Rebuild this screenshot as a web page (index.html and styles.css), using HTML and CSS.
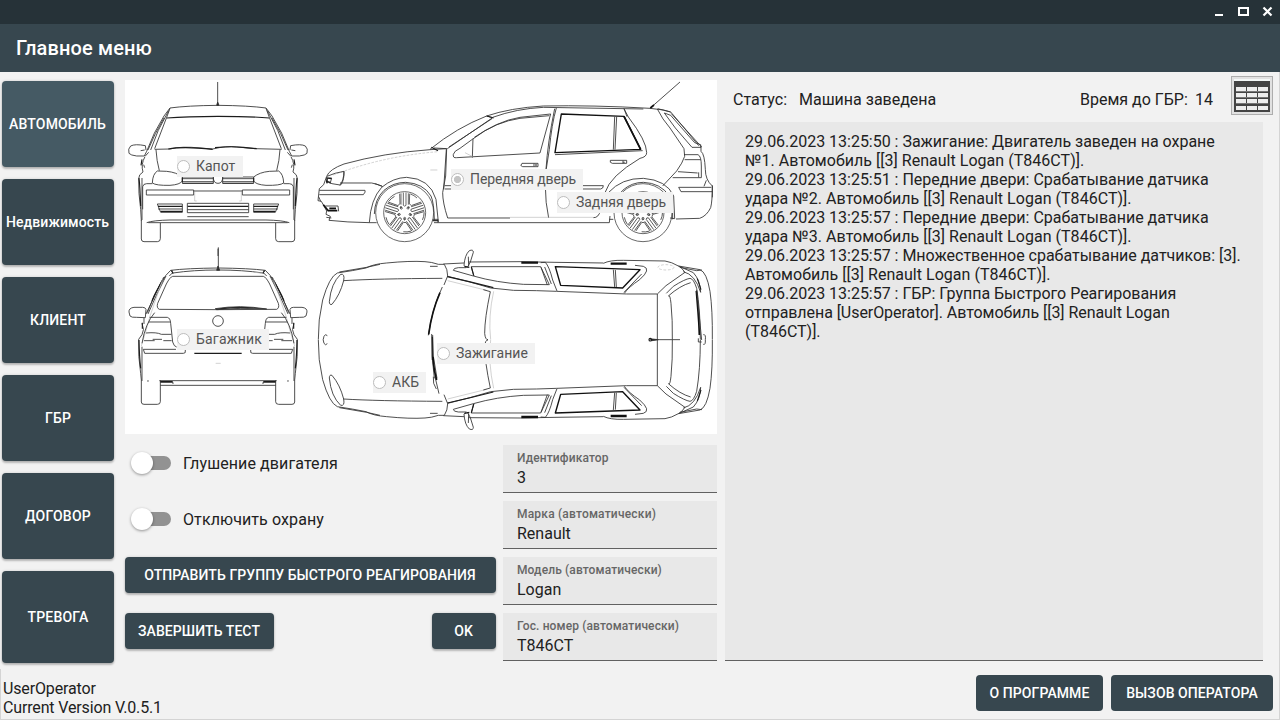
FILE: index.html
```html
<!DOCTYPE html>
<html lang="ru">
<head>
<meta charset="utf-8">
<title>Главное меню</title>
<link rel="stylesheet" href="styles.css">
</head>
<body>
<div class="window">
  <div class="titlebar">
    <svg class="win-icons" width="60" height="24" viewBox="1215 0 60 24" shape-rendering="crispEdges">
      <path d="M1215 14h8v2h-8z" fill="#fff"/>
      <path d="M1238 7h11v9h-11zM1240 9v5h7v-5z" fill="#fff" fill-rule="evenodd"/>
      <path d="M1263.5 7.500l8 8M1271.500 7.500l-8 8" stroke="#fff" stroke-width="2.200" shape-rendering="auto"/>
    </svg>
  </div>
  <header class="appbar">Главное меню</header>

  <main class="main">
    <nav class="sidebar">
      <button class="btn tab active">АВТОМОБИЛЬ</button>
      <button class="btn tab mixed">Недвижимость</button>
      <button class="btn tab">КЛИЕНТ</button>
      <button class="btn tab">ГБР</button>
      <button class="btn tab">ДОГОВОР</button>
      <button class="btn tab last">ТРЕВОГА</button>
    </nav>

    <section class="car-panel">
      <div class="scheme">
        <svg class="drawing" width="592" height="354" viewBox="125 80 592 354">
          <defs>
            <g id="front-half">
              <path d="M294 88Q200 89 150 96L132 120Q100 170 80 226M150 97L140 124L104 218M146 104Q110 165 92 222M132 126Q104 172 84 222"/>
              <path d="M140 126Q200 121 294 121" class="b"/>
              <path d="M78 222L76 209Q45 203 32 210Q23 218 27 232Q32 238 50 240L73 240L80 226M62 224L74 222"/>
              <path d="M76 240L86 229M75 242Q62 265 69 288Q56 295 56 308Q55 350 62 400L64 434M66 306V432M71 266L74 275"/>
              <path d="M57 306Q60 330 62 390M66 250L63 268" class="b"/>
              <path d="M108 221Q110 255 118 284"/>
              <path d="M187 303Q170 289 140 286L112 285Q98 294 97 321Q108 329 150 328Q180 326 187 315Z"/>
              <path d="M187 303H280V322H187M187 308H280M187 317H280"/>
              <path d="M187 305V320" class="b"/>
              <path d="M68 400V332Q70 323 80 323L97 323M187 322H280"/>
              <path d="M79 342H221V357H79Z"/>
              <path d="M224 348V375H230" class="f"/>
              <path d="M221 345H294"/>
              <path d="M294 382H202V410H294M202 401H294M202 422H294M112 384H187V409H122ZM114 399H187"/>
              <path d="M203 391H294M114 391H187M122 406H187" class="b"/>
              <path d="M80 440Q100 433 150 432H294M85 440H294"/>
              <path d="M64 432V489Q64 497 72 497H112Q121 497 121 488V441"/>
            </g>
            <g id="rear-half">
              <path d="M294 84Q200 85 152 91Q137 103 122 130L78 222M294 90Q220 90 159 99L152 91M158 98L148 108M132 112Q100 165 82 218M138 108Q108 165 84 222"/>
              <path d="M294 109H158Q150 111 139 132L113 190Q109 204 118 208L294 209"/>
              <path d="M132 112Q108 155 96 182M155 91L159 101" class="b"/>
              <path d="M78 208Q76 202 68 202H42Q26 204 27 216L30 228Q34 233 50 232L76 233Z"/>
              <path d="M130 112L106 182Q88 230 78 272L64 318" class="f"/>
              <path d="M72 234V252M66 250Q75 270 66 284L56 298Q54 350 62 400L64 420M66 320V423M104 218Q76 250 66 310"/>
              <path d="M67 248V266M57 300Q58 350 62 385" class="b"/>
              <path d="M89 232H142Q151 234 152 250L158 306Q162 320 170 321M86 246H150M78 279Q110 276 124 283H154M72 302H104M98 298H126M130 302H155"/>
              <path d="M70 328H168M70 328L74 340H190Q198 341 196 330"/>
              <path d="M64 420V486Q64 493 72 493H112Q121 493 121 485V421M118 422H294M121 436H294M121 427H159V432"/>
              <path d="M121 425H158M223 340H294" class="b"/>
              <circle cx="84" cy="423" r="1"/>
            </g>
            <g id="wheel">
              <circle r="87"/>
              <circle r="63"/>
              <g id="spoke"><path d="M-4 -60V-22M4 -60V-22M-11 -58V-24M11 -58V-24M-15 -57L-14 -26M15 -57L14 -26L20 -22M-4 -22Q0 -17 4 -22"/><path d="M17 -56Q29 -52 37 -44"/><circle cx="0" cy="17" r="3"/><circle cx="12" cy="-16" r="2"/></g>
              <use href="#spoke" transform="rotate(72)"/>
              <use href="#spoke" transform="rotate(144)"/>
              <use href="#spoke" transform="rotate(216)"/>
              <use href="#spoke" transform="rotate(288)"/>
            </g>
            <g id="top-half">
              <path d="M25 299Q24 240 38 180Q58 110 82 99Q130 92 168 84Q190 72 230 69Q300 62 345 65Q365 66 385 73H403Q413 88 413 108L402 135M88 96L170 82L210 73"/>
              <path d="M92 103Q105 100 101 122Q90 165 66 193Q58 196 58 185Q63 130 92 103Z"/>
              <path d="M100 122Q200 116 397 115M360 79H383M400 72L462 69M475 66L630 65L735 67L880 69"/>
              <path d="M413 109Q480 125 542 144Q610 154 680 152L740 154L950 162H1042"/>
              <path d="M413 122L530 151" class="f"/>
              <path d="M412 110Q480 125 550 143" class="b"/>
              <path d="M490 108Q560 128 640 133"/>
              <path d="M490 108L430 91Q430 84 445 83L468 83M484 82L492 108M484 80H692L718 134L640 133M693 82L712 135M704 81L724 132"/>
              <path d="M462 77Q464 45 478 32Q490 27 490 37L481 66L472 83M462 77L470 83M475 50L476 78"/>
              <path d="M464 79L478 82M484 80L491 107" class="b"/>
              <path d="M706 67Q718 80 728 120L741 153M692 68L706 67M880 70Q900 60 940 61L1065 63Q1085 66 1105 78L1170 89Q1190 96 1200 154Q1208 210 1207 299"/>
              <path d="M736 80L990 89L938 144L752 136Z" class="w"/>
              <path d="M910 89L914 141M916 90L919 141"/>
              <path d="M943 160Q955 142 989 119Q1025 87 1000 79L975 76M942 157L995 102"/>
              <path d="M1042 162V299M1042 162L1068 137L1125 97L1115 85L1105 78"/>
              <path d="M1069 160L1090 139Q1125 117 1140 115Q1151 116 1160 145Q1171 210 1171 299M1075 168Q1110 137 1142 128M1076 168Q1080 163 1083 190Q1088 240 1087 299"/>
              <path d="M1120 95Q1155 103 1172 157Q1171 121 1150 98L1108 79M1110 82L1160 92L1176 90"/>
              <path d="M1162 116L1173 149" class="b"/>
              <path d="M634 68H684M902 71H950" class="v"/>
              <path d="M534 299Q526 300 524 280Q524 235 541 155L520 149"/>
              <path d="M542 299Q534 230 551 154" class="f"/>
            </g>
          </defs>

          <g class="ink" transform="translate(120 76) scale(.33333)">
            <path d="M293 18V88M294 518V540"/>
            <path d="M290 88L293 78L297 88Z" fill="#222"/>
            <use href="#front-half"/>
            <use href="#front-half" transform="translate(588 0) scale(-1 1)"/>
            <path d="M104 220L150 219Q185 210 240 216L278 219Q320 209 350 213L405 218L485 220"/>
            <path d="M145 219Q190 210 278 220M285 215Q330 210 370 214L410 218" class="b"/>
            <path d="M280 304Q280 322 294 322Q308 322 308 304"/>
          </g>

          <g class="ink" transform="translate(120 240) scale(.33333)">
            <path d="M295 22V84"/>
            <path d="M290 91L294 78L299 91Z" fill="#222"/>
            <use href="#rear-half"/>
            <use href="#rear-half" transform="translate(588 0) scale(-1 1)"/>
            <circle cx="294" cy="243" r="16"/>
            <path d="M286 206Q360 194 440 207Q360 202 290 209Z" fill="#222"/>
            <path d="M287 370H302" class="f"/>
            <path d="M405 97L430 100" class="f"/>
          </g>

          <g class="ink" transform="translate(310 76) scale(.33333)">
            <path d="M50 301Q58 280 102 264Q220 231 360 221L410 218L407 300L398 350Q398 380 413 426M409 220L401 340"/>
            <path d="M70 297Q220 240 385 227" class="f" stroke-dasharray="8 4"/>
            <path d="M360 220Q440 155 530 120Q600 96 700 90Q850 87 1020 97L1060 102L1082 108Q1110 140 1166 209M372 216L410 218M412 218L548 125L530 120M417 213L546 128"/>
            <path d="M364 214L384 224M530 120L551 126" class="b"/>
            <path d="M548 124Q620 98 700 94L1000 99"/>
            <path d="M487 190Q560 135 630 124L722 114L690 231L440 245Q428 247 430 235Q432 225 450 217Z"/>
            <path d="M493 184Q560 137 630 127L718 119M489 188L487 245"/>
            <path d="M465 230L488 242" class="f"/>
            <path d="M739 96Q725 145 718 220Q706 280 706 330Q706 380 716 426M734 98Q713 200 708 280M708 280V340"/>
            <path d="M754 114L942 121L992 220L735 230Z" class="w"/>
            <path d="M942 121L992 220" class="h"/>
            <path d="M735 236L998 224M914 122L910 221M920 122L915 221"/>
            <path d="M942 98L955 123Q1010 195 1010 230Q1010 243 990 247Q900 300 885 350M942 98L951 122"/>
            <path d="M1110 18L1020 97"/>
            <path d="M1021 96L1032 87" class="h"/>
            <path d="M1042 99Q1057 130 1080 156L1122 218L1124 241Q1118 260 1100 285L1058 330M1043 98L1082 108M1063 111L1096 156L1146 214H1173L1172 206L1154 200L1082 118Z"/>
            <path d="M1084 113L1174 212M1122 236H1164Q1174 240 1174 270V305H1088M1124 251H1172M1104 287L1163 291M1166 289V304M1173 210V226Q1184 234 1186 280Q1186 312 1207 330Q1207 376 1202 395Q1190 420 1169 427L1098 429"/>
            <path d="M1204 334H1106L1113 347H1207M1207 328V364M1189 313L1182 331"/>
            <path d="M901 253H950V262H907Q898 260 901 253ZM939 254V262M636 262H684V272H638Q628 270 636 262ZM672 263V271"/>
            <path d="M942 257V260M675 267H681" class="b"/>
            <path d="M404 329H880Q880 338 872 339H404"/>
            <path d="M361 282H382" class="f"/>
            <path d="M413 426H600M850 425Q866 426 872 402L884 350M368 430H384V440M372 440H898L900 420M898 430H910"/>
            <path d="M600 424H850" class="f"/>
            <path d="M368 434H384" class="b"/>
            <path d="M50 301L41 326L28 338L24 374L34 376L42 390L50 405L48 415L61 421L57 433Q110 439 178 440H200"/>
            <path d="M51 301Q75 290 102 286Q101 315 90 327L66 323L48 315M102 286V297Q100 320 90 329M48 306H65L60 324M52 308V322M90 321H185Q200 323 218 332M194 323L216 330"/>
            <path d="M49 306L64 308M48 316L61 319M51 306L50 322" class="b"/>
            <path d="M28 343H165Q168 347 160 356H28M26 362L32 376"/>
            <path d="M40 386L56 406M54 404H82M58 397H78" class="h"/>
            <path d="M46 390H84L86 406M49 424L64 426"/>
            <path d="M178 440Q182 370 215 334Q250 305 290 304Q360 307 378 370L385 438M193 414Q194 370 222 343Q250 319 287 319Q340 322 363 360Q372 380 373 432"/>
            <use href="#wheel" transform="translate(284 410)"/>
            <path d="M895 350Q935 306 1000 307Q1070 312 1091 360L1094 428L1080 426M911 405Q912 370 938 343Q965 319 1000 319Q1052 321 1078 360Q1089 380 1088 430"/>
            <use href="#wheel" transform="translate(999 410)"/>
          </g>

          <g class="ink" transform="translate(310 240) scale(.33333)">
            <use href="#top-half"/>
            <use href="#top-half" transform="translate(0 599) scale(1 -1)"/>
            <ellipse cx="1068" cy="82" rx="24" ry="8" class="f" stroke-dasharray="8 5"/>
            <path d="M52 287Q46 280 42 289Q37 299 42 310Q46 318 52 311M1180 284Q1188 282 1186 299Q1187 316 1180 313"/>
            <path d="M397 141Q368 200 355 286"/>
            <path d="M390 158Q365 215 356 283" class="h"/>
            <path d="M365 282Q364 350 373 415M368 285Q366 350 381 415M370 410L371 430L379 447M375 410L387 461"/>
            <path d="M367 290V360" class="b"/>
            <path d="M369 350Q371 390 380 420" class="h"/>
            <path d="M1159 153Q1162 190 1164 215Q1167 250 1168 285" class="h"/>
            <path d="M1160 150L1175 300M1165 295V306H1175M1020 299H1110"/>
            <path d="M1026 297L1045 299L1026 302Z" fill="#222"/>
            <circle cx="1021" cy="299" r="4" class="b"/>
          </g>
        </svg>
        <label class="radio hood"><i></i>Капот</label>
        <label class="radio front-door on"><i></i>Передняя дверь</label>
        <label class="radio rear-door"><i></i>Задняя дверь</label>
        <label class="radio trunk"><i></i>Багажник</label>
        <label class="radio ignition"><i></i>Зажигание</label>
        <label class="radio battery"><i></i>АКБ</label>
      </div>

      <div class="controls">
        <div class="actions">
          <label class="switch"><i></i>Глушение двигателя</label>
          <label class="switch"><i></i>Отключить охрану</label>
          <button class="btn send">ОТПРАВИТЬ ГРУППУ БЫСТРОГО РЕАГИРОВАНИЯ</button>
          <div class="action-row">
            <button class="btn finish">ЗАВЕРШИТЬ ТЕСТ</button>
            <button class="btn ok">OK</button>
          </div>
        </div>
        <div class="fields">
          <div class="field"><span class="caption">Идентификатор</span><span class="value">3</span></div>
          <div class="field"><span class="caption wide">Марка (автоматически)</span><span class="value">Renault</span></div>
          <div class="field"><span class="caption">Модель (автоматически)</span><span class="value">Logan</span></div>
          <div class="field"><span class="caption">Гос. номер (автоматически)</span><span class="value">Т846СТ</span></div>
        </div>
      </div>
    </section>

    <section class="log-panel">
      <div class="status">
        <span class="status-name">Статус:</span>
        <span class="status-value">Машина заведена</span>
        <span class="timer-name">Время до ГБР:</span>
        <span class="timer-value">14</span>
        <button class="table-btn">
          <svg width="36" height="34" viewBox="0 0 36 34" shape-rendering="crispEdges">
            <path d="M0 0h36v2H0z" fill="#f4f8f7"/>
            <path d="M0 2h36v31H0z" fill="#444"/>
            <path d="M2 8h10v4H2zM13 8h10v4H13zM24 8h10v4H24zM2 14h10v4H2zM13 14h10v4H13zM24 14h10v4H24zM2 20h10v4H2zM13 20h10v4H13zM24 20h10v4H24zM2 27h10v4H2zM13 27h10v4H13zM24 27h10v4H24z" fill="#eee"/>
            <path d="M2 12h32v1H2zM2 18h32v1H2zM2 24h32v1H2z" fill="#777"/>
          </svg>
        </button>
      </div>
      <div class="log">29.06.2023 13:25:50 : Зажигание: Двигатель заведен на охране<br><span class="loose">№1. Автомобиль [[3] Renault Logan (Т846СТ)].</span><br>29.06.2023 13:25:51 : Передние двери: Срабатывание датчика<br><span class="loose">удара №2. Автомобиль [[3] Renault Logan (Т846СТ)].</span><br>29.06.2023 13:25:57 : Передние двери: Срабатывание датчика<br><span class="loose">удара №3. Автомобиль [[3] Renault Logan (Т846СТ)].</span><br>29.06.2023 13:25:57 : Множественное срабатывание датчиков: [3].<br><span class="loose">Автомобиль [[3] Renault Logan (Т846СТ)].</span><br>29.06.2023 13:25:57 : ГБР: Группа Быстрого Реагирования<br><span class="tight">отправлена [UserOperator]. Автомобиль [[3] Renault Logan</span><br>(Т846СТ)].</div>
    </section>
  </main>

  <footer class="footer">
    <div class="version">UserOperator<br>Current Version V.0.5.1</div>
    <button class="btn flat about">О ПРОГРАММЕ</button>
    <button class="btn flat call">ВЫЗОВ ОПЕРАТОРА</button>
  </footer>
</div>
</body>
</html>
```
FILE: styles.css
```css
* { box-sizing: border-box; }
body {
  margin: 0;
  font-family: Roboto, "Liberation Sans", sans-serif;
  font-size: 16px;
  line-height: 19px;
  color: #212121;
}
.window {
  width: 1280px;
  height: 720px;
  display: flex;
  flex-direction: column;
  background: #f2f2f2;
  overflow: hidden;
}
.titlebar {
  height: 24px;
  flex: none;
  display: flex;
  justify-content: flex-end;
  padding-right: 5px;
  background: #263238;
}
.appbar {
  height: 48px;
  flex: none;
  padding-left: 16px;
  line-height: 49px;
  font-size: 20px;
  font-weight: 500;
  letter-spacing: .15px;
  color: #fff;
  background: #37474f;
}
.main {
  height: 597px;
  flex: none;
  display: flex;
  padding: 0 16px 0 2px;
  border-right: 1px solid #d4d4d4;
}
.btn {
  border: 0;
  padding: 0;
  margin: 0;
  border-radius: 4px;
  background: #37474f;
  color: #fff;
  font: 500 14px/16px Roboto, "Liberation Sans", sans-serif;
  letter-spacing: .08px;
  text-align: center;
  white-space: nowrap;
  box-shadow: 0 2px 2px rgba(0, 0, 0, .22), 0 0 3px rgba(0, 0, 0, .15);
}
.btn.flat { box-shadow: none; }
.sidebar {
  width: 112px;
  display: flex;
  flex-direction: column;
  gap: 12px;
  padding-top: 9px;
}
.tab { height: 86px; flex: none; letter-spacing: .2px; }
.tab.mixed { letter-spacing: .1px; padding-right: 1px; }
.tab.active { background: #455a64; letter-spacing: .15px; padding-right: 1px; }
.tab.last { height: 92px; }
.car-panel { width: 592px; margin-left: 11px; padding-top: 8px; }
.scheme { position: relative; height: 354px; background: #fff; }
.drawing { display: block; }
.ink { fill: none; stroke: #333; stroke-width: 2.6; stroke-linejoin: round; }
.drawing .b { stroke: #1c1c1c; stroke-width: 3.4; }
.drawing .w { stroke: #111; stroke-width: 4.2; }
.drawing .h { stroke: #111; stroke-width: 5; }
.drawing .v { stroke: #111; stroke-width: 7; }
.drawing .f { stroke: #bbb; stroke-width: 2; }
#wheel { stroke-width: 2.2; }
.radio {
  position: absolute;
  height: 21px;
  display: flex;
  align-items: center;
  background: #f2f2f2;
  color: #555;
  font-size: 14px;
  white-space: nowrap;
}
.radio i {
  width: 13px;
  height: 13px;
  margin-right: 6px;
  border: 1px solid #bdbdbd;
  border-radius: 50%;
  background: #fff;
}
.radio.on i { background: radial-gradient(circle, #c4c4c4 3.2px, #fff 4px); }
.hood { left: 52px; top: 76px; width: 66px; }
.front-door { left: 326px; top: 89px; width: 132px; letter-spacing: -.1px; }
.rear-door { left: 432px; top: 112px; width: 116px; letter-spacing: -.05px; }
.trunk { left: 52px; top: 249px; width: 92px; letter-spacing: .2px; }
.ignition { left: 312px; top: 263px; width: 98px; }
.battery { left: 248px; top: 292px; width: 53px; }
.controls { display: flex; justify-content: space-between; padding-top: 11px; }
.actions { width: 371px; display: flex; flex-direction: column; }
.switch { height: 37px; margin-bottom: 19px; display: flex; align-items: center; letter-spacing: .1px; }
.switch i {
  position: relative;
  width: 33px;
  height: 14px;
  margin: -2px 12px 0 13px;
  border-radius: 7px;
  background: #929292;
}
.switch i::before {
  content: "";
  position: absolute;
  left: -7px;
  top: -4px;
  width: 22px;
  height: 22px;
  border-radius: 50%;
  background: #fff;
  box-shadow: 0 1px 3px rgba(0, 0, 0, .4);
}
.send { height: 36px; margin-bottom: 20px; padding-right: 1px; }
.action-row { display: flex; justify-content: space-between; }
.finish { width: 149px; height: 36px; padding-right: 1px; }
.ok { width: 64px; height: 36px; padding-right: 1px; }
.fields { width: 214px; display: flex; flex-direction: column; gap: 8px; }
.field {
  height: 48px;
  display: flex;
  flex-direction: column;
  padding: 5px 14px 0;
  background: #e8e8e8;
  border-bottom: 1px solid #616161;
}
.caption { font-size: 12px; font-weight: 500; line-height: 16px; color: #666; letter-spacing: .12px; }
.caption.wide { letter-spacing: .2px; }
.value { line-height: 19px; margin-top: 2px; }
.log-panel { width: 538px; margin-left: 8px; }
.status { height: 50px; display: flex; padding-left: 8px; line-height: 55px; }
.status-name { width: 66px; }
.status-value { flex: 1; }
.timer-name { width: 115px; }
.timer-value { width: 36px; }
.table-btn {
  width: 42px;
  height: 39px;
  flex: none;
  margin: 4px -10px 0 0;
  padding: 2px;
  border: 1px solid #adadad;
  background: #e1e1e1;
}
.table-btn svg { display: block; }
.log {
  height: 539px;
  padding: 10px 0 0 20px;
  background: #e8e8e8;
  border-bottom: 1px solid #616161;
  letter-spacing: -.02px;
  white-space: nowrap;
}
.loose { letter-spacing: .03px; }
.tight { letter-spacing: -.06px; }
.footer {
  height: 51px;
  flex: none;
  display: flex;
  gap: 8px;
  padding: 6px 6px 0 2px;
  border: 1px solid #d4d4d4;
  border-top: 0;
}
.version { flex: 1; padding-top: 4px; letter-spacing: -.15px; }
.flat { height: 36px; }
.about { width: 127px; }
.call { width: 162px; }
```
